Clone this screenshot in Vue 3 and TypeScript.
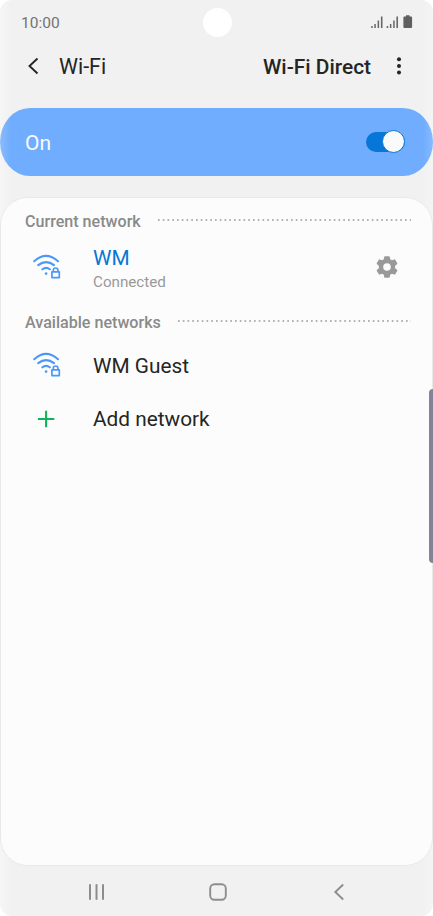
<script setup lang="ts">
import { ref } from 'vue'

interface Network {
  name: string
}

const enabled = ref(true)
const current: Network = { name: 'WM' }
const available: Network[] = [{ name: 'WM Guest' }]
</script>

<template>
  <main class="phone">
    <header class="status">
      <span class="time">10:00</span>
      <span class="camera"></span>
      <svg class="indicators" width="42" height="14" viewBox="0 0 42 14" fill="#686868">
        <path d="M.2 11h1.500v2H.2zM3.300 9h1.500v4H3.300zM6.600 5.500h1.500V13H6.600zM9.900 1.500h1.600V13H9.900zM15.700 11h1.500v2h-1.500zM18.900 9h1.500v4h-1.500zM22.200 5.500h1.500V13h-1.500zM25.400 1.500H27V13h-1.600z" />
        <path fill="#5f5f5f" d="M35 .2h3.500v1.200h1.500q1.100 0 1.100 1.100v9.400q0 1.100-1.100 1.100h-6.500q-1.100 0-1.100-1.100V2.500q0-1.100 1.100-1.100H35z" />
      </svg>
    </header>

    <nav class="toolbar">
      <svg class="back" width="13" height="18" viewBox="0 0 13 18">
        <path d="M11.500 1.500 3.500 9l8 7.500" fill="none" stroke="#252525" stroke-width="1.900" />
      </svg>
      <h1>Wi-Fi</h1>
      <span class="direct">Wi-Fi Direct</span>
      <svg class="more" width="6" height="18" viewBox="0 0 6 18" fill="#252525">
        <circle cx="3" cy="2.300" r="2" />
        <circle cx="3" cy="8.900" r="2" />
        <circle cx="3" cy="15.500" r="2" />
      </svg>
    </nav>

    <section class="banner" @click="enabled = !enabled">
      <span class="state">{{ enabled ? 'On' : 'Off' }}</span>
      <span class="switch" :class="{ off: !enabled }"><span class="knob"></span></span>
    </section>

    <section class="card">
      <div class="heading first">
        <h2>Current network</h2>
        <svg class="dots" height="2"><line x1="0" y1="1" x2="100%" y2="1" /></svg>
      </div>
      <div class="row connected">
        <svg class="wifi" width="28" height="25" viewBox="0 0 28 25">
          <g fill="none" stroke="#4a98fb" stroke-width="2.100" stroke-linecap="round">
            <path d="M1.200 7.200Q13.100-3.400 25 7.200M5.200 11.200Q13.100 5 21 11.200M9.400 15.300Q13.100 12.300 16.800 15.300" />
            <path d="M18.900 17.900h7.400v5.700h-7.400zM20.300 17.500v-1.200a2.300 2.300 0 0 1 4.600 0v1.200" stroke-width="1.700" stroke-linejoin="round" />
          </g>
          <circle cx="13.100" cy="19.600" r="1.300" fill="#4a98fb" />
        </svg>
        <div class="label">
          <span class="name active">{{ current.name }}</span>
          <span class="detail">Connected</span>
        </div>
        <svg class="gear" width="22" height="22" viewBox="0 0 22 22">
          <path
            fill="#999"
            fill-rule="evenodd"
            d="M9 .2h4q.7 0 .8.700l.4 2.400 1.700 1 2.300-.9q.7-.2 1 .3l2 3.400q.3.600-.2 1.100l-1.900 1.500v2.600l1.900 1.500q.5.500.2 1.100l-2 3.400q-.3.500-1 .3l-2.300-.9-1.700 1-.4 2.400q-.1.700-.8.700H9q-.7 0-.8-.7l-.4-2.400-1.700-1-2.300.9q-.7.200-1-.3l-2-3.400q-.3-.6.200-1.100l1.900-1.500V9.700L1 8.200Q.5 7.700.8 7.100l2-3.400q.3-.5 1-.3l2.300.9 1.700-1 .4-2.400Q8.300.2 9 .2ZM11 7.200a3.800 3.800 0 1 0 0 7.600 3.800 3.800 0 0 0 0-7.600Z"
          />
        </svg>
      </div>

      <div class="heading">
        <h2>Available networks</h2>
        <svg class="dots" height="2"><line x1="0" y1="1" x2="100%" y2="1" /></svg>
      </div>
      <div v-for="network in available" :key="network.name" class="row network">
        <svg class="wifi" width="28" height="25" viewBox="0 0 28 25">
          <g fill="none" stroke="#4a98fb" stroke-width="2.100" stroke-linecap="round">
            <path d="M1.200 7.200Q13.100-3.400 25 7.200M5.200 11.200Q13.100 5 21 11.200M9.400 15.300Q13.100 12.300 16.800 15.300" />
            <path d="M18.900 17.900h7.400v5.700h-7.400zM20.300 17.500v-1.200a2.300 2.300 0 0 1 4.600 0v1.200" stroke-width="1.700" stroke-linejoin="round" />
          </g>
          <circle cx="13.100" cy="19.600" r="1.300" fill="#4a98fb" />
        </svg>
        <span class="name">{{ network.name }}</span>
      </div>
      <div class="row add">
        <svg class="plus" width="28" height="18" viewBox="0 0 28 18">
          <path d="M13.100 .8v16.400M4.900 9h16.400" fill="none" stroke="#0fb457" stroke-width="2.100" />
        </svg>
        <span class="name">Add network</span>
      </div>
    </section>

    <footer class="keys">
      <svg width="18" height="18" viewBox="0 0 18 18" stroke="#8d8d8d" stroke-width="2" stroke-linecap="round">
        <path d="M3 2v14M9.500 2v14M16 2v14" />
      </svg>
      <svg width="18" height="18" viewBox="0 0 18 18" fill="none" stroke="#8d8d8d" stroke-width="1.900">
        <rect x="1.200" y="1.200" width="15.600" height="15.600" rx="4.200" />
      </svg>
      <svg width="18" height="18" viewBox="0 0 18 18" fill="none" stroke="#8d8d8d" stroke-width="1.900">
        <path d="M13.200 1.500 5.300 9l7.900 7.500" />
      </svg>
    </footer>
    <span class="edge-handle"></span>
  </main>
</template>

<style>
body {
  margin: 0;
  background: #fff;
}
</style>

<style scoped>
.phone {
  position: relative;
  display: flex;
  flex-direction: column;
  box-sizing: border-box;
  width: 433px;
  height: 916px;
  overflow: hidden;
  border-radius: 12px;
  background: linear-gradient(90deg, #f6f6f6, #f1f1f1 11px, #f1f1f1 422px, #f4f4f4);
  font-family: Roboto, sans-serif;
  color: #252525;
}
.phone > * {
  flex: none;
}
svg {
  display: block;
  flex: none;
}
.status {
  display: grid;
  grid-template-columns: 1fr 29px 1fr;
  align-items: center;
  height: 44px;
  padding: 0 20px 0 21px;
  box-sizing: border-box;
}
.time {
  padding-top: 2px;
  font-size: 15.500px;
  color: #737373;
}
.camera {
  width: 29px;
  height: 29px;
  border-radius: 50%;
  background: #fff;
}
.indicators {
  justify-self: end;
}
.toolbar {
  display: flex;
  align-items: center;
  height: 44px;
  padding: 0 31px 0 26px;
}
h1 {
  margin: 1px auto 0 20px;
  font-size: 21.400px;
  font-weight: 400;
  line-height: 26px;
}
.direct {
  margin-right: 25px;
  padding-top: 1px;
  font-size: 20.900px;
  font-weight: 500;
}
.banner {
  display: flex;
  align-items: center;
  justify-content: space-between;
  height: 67.500px;
  margin-top: 20px;
  padding: 0 28px 0 25px;
  border-radius: 30px / 34px;
  background: linear-gradient(90deg, #8dbcfb, #70adff 10px, #70adff 423px, #86baff);
}
.state {
  padding-top: 2px;
  font-size: 21px;
  color: #f8fbff;
}
.switch {
  display: flex;
  align-items: center;
  justify-content: flex-end;
  width: 39px;
  height: 20px;
  border-radius: 10px;
  background: #0676d8;
}
.switch.off {
  justify-content: flex-start;
  background: #9aa8b8;
}
.knob {
  width: 21px;
  height: 21px;
  flex: none;
  border: 1px solid #0676d8;
  border-radius: 50%;
  background: #fafafa;
}
.card {
  box-sizing: border-box;
  height: 669px;
  margin: 21.500px 0 0;
  border: 1px solid #e9e9e9;
  border-radius: 28px;
  background: #fcfcfc;
}
.heading {
  display: flex;
  align-items: center;
  height: 24px;
  padding: 0 21px 0 24px;
}
.first {
  margin-top: 11px;
}
h2 {
  margin: 0;
  padding-top: 2px;
  font-size: 16.100px;
  font-weight: 500;
  line-height: 24px;
  color: #8a8a8a;
  white-space: nowrap;
}
.dots {
  flex: 1;
  min-width: 0;
  margin: -2px 0 0 17px;
}
.dots line {
  stroke: #9b9b9b;
  stroke-width: 1.600;
  stroke-dasharray: 1.700 3.050;
}
.row {
  display: flex;
  align-items: center;
  box-sizing: border-box;
  padding: 0 34px 0 32px;
}
.connected {
  height: 77px;
  padding-bottom: 10px;
}
.network {
  height: 63px;
}
.network .wifi {
  margin-top: -2px;
}
.add {
  height: 44px;
}
.label {
  display: flex;
  flex-direction: column;
  margin: 4px 0 0 32px;
}
.name {
  font-size: 20.800px;
  line-height: 26px;
}
.network .name,
.add .name {
  margin-left: 32px;
}
.active {
  color: #0676d3;
}
.detail {
  font-size: 15.200px;
  line-height: 22px;
  color: #999;
}
.gear {
  margin: 1px 0 0 auto;
}
.keys {
  display: flex;
  align-items: center;
  justify-content: space-between;
  box-sizing: border-box;
  height: 50px;
  padding: 1px 85px 0 87px;
}
.edge-handle {
  position: absolute;
  top: 389px;
  right: 0;
  width: 4px;
  height: 174px;
  border-radius: 4px 0 0 4px;
  background: #858196;
}
</style>
